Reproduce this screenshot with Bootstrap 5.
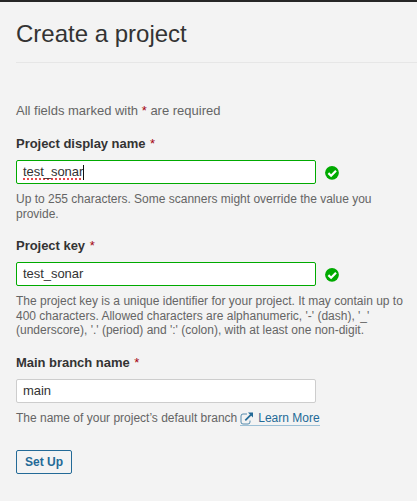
<!DOCTYPE html>
<html lang="en">
<head>
<meta charset="utf-8">
<meta name="viewport" content="width=device-width, initial-scale=1">
<title>Create a project</title>
<link href="https://cdn.jsdelivr.net/npm/bootstrap@5.3.0/dist/css/bootstrap.min.css" rel="stylesheet">
<style>
body{background:#f3f3f3;color:#333;font:13px/20px "Liberation Sans",Arial,sans-serif;border-top:2px solid #262626;min-height:501px;overflow:hidden}
.page-title{font-size:24px;line-height:32px;font-weight:400;padding:16px 0 12px;height:61px;border-bottom:1px solid #e6e6e6}
.muted-text{color:#656565}
.intro{margin-top:38px;height:20px}
.req{color:#a4030f}
.field-label{font-weight:700;line-height:20px;height:20px;margin-bottom:6px;display:block;letter-spacing:-.03px}
.field-label .req{margin-left:1px;font-weight:400}
.form-control.field-input{width:300px;height:24px;min-height:24px;padding:0 6px;border:1px solid #cdcdcd;border-radius:2px;background:#fff;color:#333;font-size:13px;line-height:22px;letter-spacing:-.05px}
.form-control.field-input.ok{border-color:#0a0}
.help{font-size:12px;line-height:14.5px;margin-top:8px;white-space:nowrap}
.project-field{height:102px}
.key-field{height:117px}
.branch-field{height:97px}
.intro + form{margin-top:13px}
.typed{text-decoration:underline dotted #e8484a 2px;text-decoration-skip-ink:none;text-underline-offset:2px}
.caret{width:1px;height:15px;background:#111}
.docs-link{color:#236a97;text-decoration:none;border-bottom:1px solid #9cc0d6;display:inline-block;height:15px;margin-left:3px}
.docs-link svg{margin-right:4px}
.btn.setup{height:24px;padding:0;border:1px solid #236a97;border-radius:2px;color:#236a97;font-size:12px;font-weight:700;line-height:22px;width:56px;white-space:nowrap}
</style>
</head>
<body>
<main class="ps-3">
<h1 class="page-title m-0">Create a project</h1>
<p class="intro muted-text mb-0">All fields marked with <span class="req">*</span> are required</p>
<form>
<div class="project-field">
<label class="field-label">Project display name <span class="req">*</span></label>
<div class="d-flex align-items-center">
<div class="form-control field-input ok d-flex align-items-center"><span class="typed">test_sonar</span><span class="caret"></span></div>
<svg class="check ms-2" width="16" height="16" viewBox="0 0 16 16"><circle cx="8" cy="8.8" r="6.9" fill="#0a0"/><path d="M4.4 9.1l2.7 2.6 4.9-5" fill="none" stroke="#fff" stroke-width="2.2"/></svg>
</div>
<div class="help muted-text">Up to 255 characters. Some scanners might override the value you<br>provide.</div>
</div>
<div class="key-field">
<label class="field-label">Project key <span class="req">*</span></label>
<div class="d-flex align-items-center">
<div class="form-control field-input ok">test_sonar</div>
<svg class="check ms-2" width="16" height="16" viewBox="0 0 16 16"><circle cx="8" cy="8.8" r="6.9" fill="#0a0"/><path d="M4.4 9.1l2.7 2.6 4.9-5" fill="none" stroke="#fff" stroke-width="2.2"/></svg>
</div>
<div class="help muted-text">The project key is a unique identifier for your project. It may contain up to<br>400 characters. Allowed characters are alphanumeric, '-' (dash), '_'<br>(underscore), '.' (period) and ':' (colon), with at least one non-digit.</div>
</div>
<div class="branch-field">
<label class="field-label">Main branch name <span class="req">*</span></label>
<div class="form-control field-input">main</div>
<div class="help muted-text d-flex">The name of your project’s default branch<a class="docs-link" href="#"><svg class="align-top" width="14" height="14" viewBox="0 0 14 14" fill="none"><path d="M7 3H3Q1 3 1 5v6q0 2 2 2h5q2 0 2-2V9.5" stroke="#236a97" stroke-opacity=".75"/><path d="M5.3 9.4L11 3.7" stroke="#236a97" stroke-width="1.7"/><path d="M8 1.5h5v5z" fill="#236a97"/></svg>Learn More</a></div>
</div>
<button type="button" class="btn setup">Set Up</button>
</form>
</main>
<script src="https://cdn.jsdelivr.net/npm/bootstrap@5.3.0/dist/js/bootstrap.bundle.min.js"></script>
</body>
</html>
